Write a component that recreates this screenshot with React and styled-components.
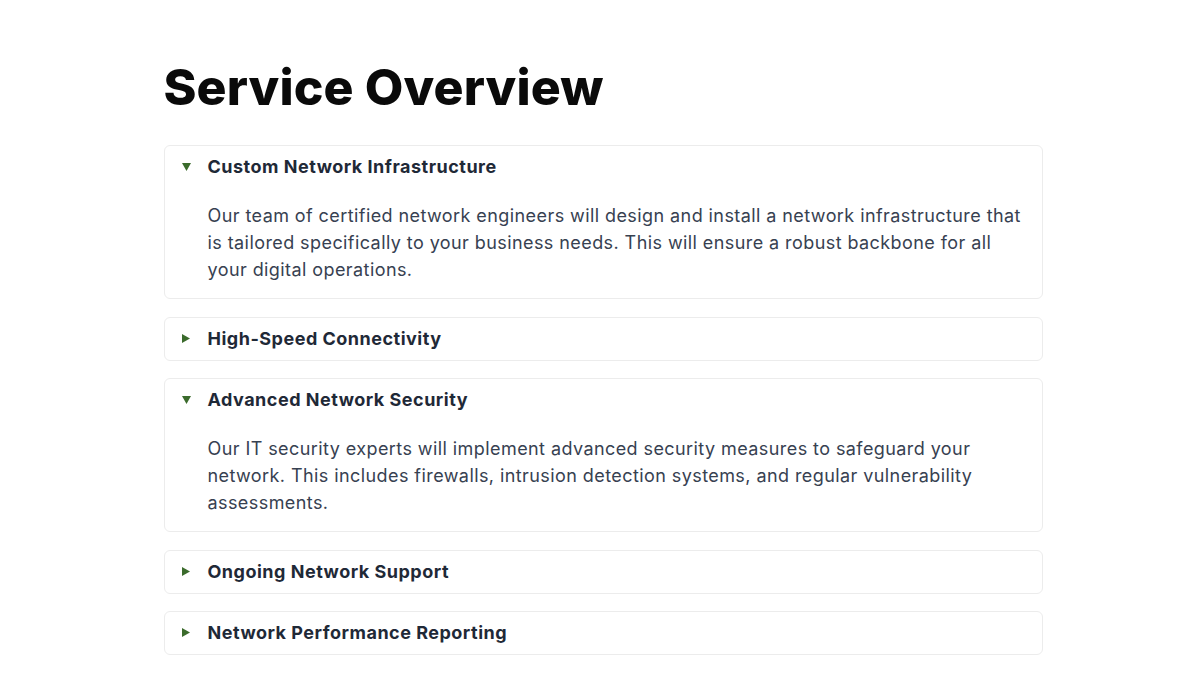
import { useState } from "react";
import styled, { createGlobalStyle } from "styled-components";

const GlobalStyle = createGlobalStyle`
  body {
    margin: 0;
    background: #ffffff;
    font-family: Inter, "Noto Sans", sans-serif;
  }
`;

const Page = styled.main`
  width: 879px;
  margin: 0 auto;
  padding: 57px 0 40px;
  box-sizing: border-box;
  transform: translateX(3px);
`;

const Title = styled.h1`
  margin: 0 0 28px;
  font-size: 50px;
  line-height: 60px;
  font-weight: 800;
  letter-spacing: 0.1px;
  color: #0a0a0a;
`;

const List = styled.div`
  display: flex;
  flex-direction: column;
  gap: 17.5px;
`;

const Card = styled.section`
  border: 1px solid #ececec;
  border-radius: 6px;
  background: #fff;
  padding: 0 20px 0 16px;
`;

const Summary = styled.button`
  display: flex;
  align-items: center;
  width: 100%;
  padding: 7px 0 8px;
  border: 0;
  background: none;
  cursor: pointer;
  font: inherit;
  font-size: 18px;
  line-height: 27px;
  font-weight: 700;
  letter-spacing: 0.5px;
  color: #1f2937;
  text-align: left;
`;

const Marker = styled.span`
  width: 26px;
  flex: none;
  display: flex;
  align-items: center;
  padding-left: 1px;

  svg {
    display: block;
    fill: #3b6b2c;
  }
`;

const Body = styled.p`
  margin: 0;
  padding: 14px 0 15px 27px;
  font-size: 18px;
  line-height: 27px;
  letter-spacing: 0.42px;
  color: #374151;
`;

const items = [
  {
    title: "Custom Network Infrastructure",
    text: "Our team of certified network engineers will design and install a network infrastructure that is tailored specifically to your business needs. This will ensure a robust backbone for all your digital operations.",
  },
  {
    title: "High-Speed Connectivity",
    text: "We provide high-speed connectivity solutions that keep your teams, offices and customers connected without interruption.",
  },
  {
    title: "Advanced Network Security",
    text: "Our IT security experts will implement advanced security measures to safeguard your network. This includes firewalls, intrusion detection systems, and regular vulnerability assessments.",
  },
  {
    title: "Ongoing Network Support",
    text: "Our support team monitors and maintains your network around the clock so issues are resolved before they affect your business.",
  },
  {
    title: "Network Performance Reporting",
    text: "Regular reports give you clear insight into uptime, throughput and usage across your network.",
  },
];

function Arrow({ open }) {
  return open ? (
    <svg width="9" height="8" viewBox="0 0 9 8">
      <path d="M0 0h9L4.5 8z" />
    </svg>
  ) : (
    <svg width="8" height="9" viewBox="0 0 8 9">
      <path d="M0 0l8 4.5L0 9z" />
    </svg>
  );
}

export default function App() {
  const [open, setOpen] = useState([0, 2]);

  const toggle = (i) => {
    setOpen((prev) =>
      prev.includes(i) ? prev.filter((x) => x !== i) : [...prev, i]
    );
  };

  return (
    <>
      <GlobalStyle />
      <Page>
        <Title>Service Overview</Title>
        <List>
          {items.map((item, i) => (
            <Card key={item.title}>
              <Summary onClick={() => toggle(i)}>
                <Marker>
                  <Arrow open={open.includes(i)} />
                </Marker>
                {item.title}
              </Summary>
              {open.includes(i) && <Body>{item.text}</Body>}
            </Card>
          ))}
        </List>
      </Page>
    </>
  );
}
